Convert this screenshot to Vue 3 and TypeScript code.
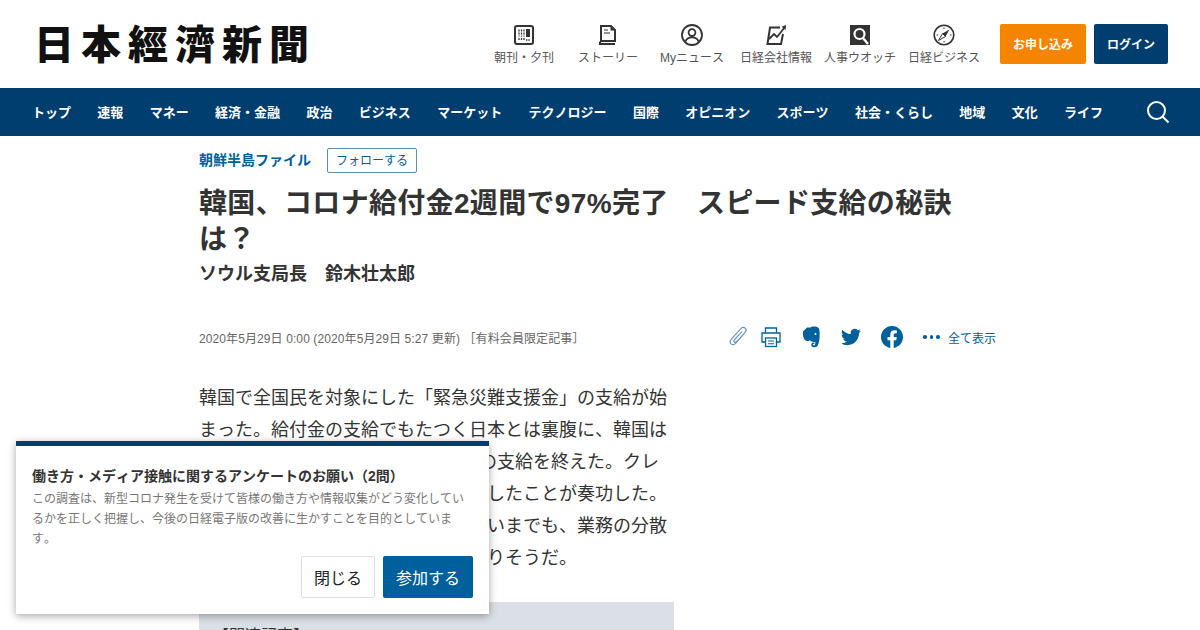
<script setup lang="ts">
const navItems: string[] = [
  'トップ', '速報', 'マネー', '経済・金融', '政治', 'ビジネス', 'マーケット',
  'テクノロジー', '国際', 'オピニオン', 'スポーツ', '社会・くらし', '地域', '文化', 'ライフ',
]

const bodyText =
  '韓国で全国民を対象にした「緊急災難支援金」の支給が始まった。給付金の支給でもたつく日本とは裏腹に、韓国は開始から約2週間で全世帯の97%への支給を終えた。クレジットカード会社のポイントで支給したことが奏功した。日本で同じ仕組みを導入とはいかないまでも、業務の分散化やデジタル化など学ぶ点は多くありそうだ。'
</script>

<template>
  <div class="page">
    <header class="top">
      <div class="logo">日本經濟新聞</div>
      <div class="tools">
        <a class="tool">
          <svg width="22" height="22" viewBox="0 0 22 22">
            <rect x="2" y="2" width="18" height="18" rx="2" fill="none" stroke="#333" stroke-width="2" />
            <path d="M6 5.500v7M8.500 5.500v7M11 5.500v7M6 14v2.500M8.500 14v2.500M11 14v2.500" stroke="#333" stroke-width="1.300" stroke-dasharray="2 1" />
            <rect x="13" y="5" width="4" height="8" fill="#333" />
            <path d="M13 16h4" stroke="#333" stroke-width="1.300" stroke-dasharray="1.400 .9" />
          </svg>
          <span>朝刊・夕刊</span>
        </a>
        <a class="tool">
          <svg width="22" height="22" viewBox="0 0 22 22">
            <path d="M4 17V2h10l4 4v11z" fill="none" stroke="#333" stroke-width="2" />
            <path d="M13.500 2v4.500H18z" fill="#333" />
            <path d="M7 6h4M7 9h6" stroke="#333" stroke-width="1.200" />
            <path d="M3 17.500v2.500h15" fill="none" stroke="#333" stroke-width="2" />
          </svg>
          <span>ストーリー</span>
        </a>
        <a class="tool">
          <svg width="22" height="22" viewBox="0 0 22 22" fill="none" stroke="#333" stroke-width="1.800">
            <circle cx="11" cy="11" r="10" />
            <circle cx="11" cy="8.600" r="3.400" />
            <path d="M4.400 17.600c1-3 3.500-4.200 6.600-4.200s5.600 1.200 6.600 4.200" />
          </svg>
          <span>Myニュース</span>
        </a>
        <a class="tool">
          <svg width="22" height="22" viewBox="0 0 22 22" fill="none" stroke="#333" stroke-width="2">
            <path d="M15 3.500H5L2.500 20H16l2-10" />
            <path d="M4 15l5-5 3 3 8-10" stroke-width="1.800" />
            <path d="M16.500 2.800L21 1l-.4 5z" fill="#333" stroke="none" />
          </svg>
          <span>日経会社情報</span>
        </a>
        <a class="tool">
          <svg width="22" height="22" viewBox="0 0 22 22">
            <rect x="1" y="1" width="20" height="20" fill="#333" />
            <circle cx="10.500" cy="10" r="5" fill="none" stroke="#fff" stroke-width="2.200" />
            <path d="M14 14l5 6" stroke="#fff" stroke-width="2.400" />
          </svg>
          <span>人事ウオッチ</span>
        </a>
        <a class="tool">
          <svg width="22" height="22" viewBox="0 0 22 22">
            <circle cx="11" cy="11" r="9.800" fill="none" stroke="#333" stroke-width="1.600" />
            <path d="M16.500 5.500L12.500 12.500 9.500 9.500z" fill="#333" />
            <path d="M5.500 16.500L9.500 9.500l3 3z" fill="none" stroke="#333" stroke-width="1" />
            <path d="M11 3.500v1.500M11 17v1.500M3.500 11H5M17 11h1.500" stroke="#333" stroke-width="1" />
          </svg>
          <span>日経ビジネス</span>
        </a>
      </div>
      <a class="btn-apply">お申し込み</a>
      <a class="btn-login">ログイン</a>
    </header>

    <nav class="gnav">
      <a v-for="item in navItems" :key="item" class="gnav-item">{{ item }}</a>
      <svg class="gnav-search" width="24" height="24" viewBox="0 0 24 24" fill="none" stroke="#fff" stroke-width="2">
        <circle cx="10.500" cy="10.500" r="8.500" />
        <path d="M16.500 16.500l6 6" />
      </svg>
    </nav>

    <main class="article">
      <div class="topic">
        <a class="topic-name">朝鮮半島ファイル</a>
        <a class="follow">フォローする</a>
      </div>
      <h1 class="title">韓国、コロナ給付金2週間で97%完了　スピード支給の秘訣は？</h1>
      <p class="author">ソウル支局長　鈴木壮太郎</p>

      <div class="meta">
        <span class="date">2020年5月29日 0:00 (2020年5月29日 5:27 更新) ［有料会員限定記事］</span>
        <div class="actions">
          <div class="action-group">
            <svg width="20" height="22" viewBox="0 0 20 22" fill="none" stroke="#5c8fb0" stroke-width="1.100">
              <path d="M16.500 6L7 17c-1.500 1.800-3.800 2-5 .9-1.200-1.200-1-3 .4-4.700L11.500 3c1.300-1.500 3.200-2 4.600-.8 1.300 1.200 1 3-.2 4.400L7.800 15.600c-.7.800-1.800 1-2.400.4-.6-.6-.5-1.500.2-2.300L13 5.500" />
            </svg>
            <svg width="22" height="22" viewBox="0 0 22 22" fill="none" stroke="#00609c" stroke-width="1.300">
              <path d="M5.500 6.500V2h11v4.500" />
              <path d="M5 16H2V7h18v9h-3" />
              <rect x="5.500" y="12" width="11" height="8.500" />
              <path d="M8 15h6M8 17.800h6" stroke-width="1.100" />
            </svg>
          </div>
          <svg width="20" height="22" viewBox="0 0 20 22">
            <path fill="#00609c" d="M5 1.500h3.500c1-1 3-1.300 5-.9 2.500.5 3.500 1.400 3.800 3.400.4 2.300.5 5 .2 8-.3 3.500-1 6.800-2.500 8.500-1.500 1-3.500 1-4.800.2-1.200-.9-1.200-2.900 0-3.800 1-.6 2.300-.4 2.900.4l-1.300.6c-.5-.3-1.200 0-1.100.7.200.8 1.300 1 2 .6.700-.7.800-2 .5-3.200-2.500 0-4.500-.4-5.300-2-.7 1.300-2.300 1.300-3.700.8C2 13.800 1.300 11.500 1 9c-.1-1.500 0-2.700 0-3.500z" />
            <circle cx="13.500" cy="8" r="1" fill="#fff" />
          </svg>
          <svg width="20" height="20" viewBox="0 0 24 24">
            <path fill="#00609c" d="M23.953 4.570a10 10 0 01-2.825.775 4.958 4.958 0 002.163-2.723c-.951.555-2.005.959-3.127 1.184a4.920 4.920 0 00-8.384 4.482C7.690 8.095 4.067 6.130 1.640 3.162a4.822 4.822 0 00-.666 2.475c0 1.710.870 3.213 2.188 4.096a4.904 4.904 0 01-2.228-.616v.060a4.923 4.923 0 003.946 4.827 4.996 4.996 0 01-2.212.085 4.936 4.936 0 004.604 3.417 9.867 9.867 0 01-6.102 2.105c-.390 0-.779-.023-1.170-.067a13.995 13.995 0 007.557 2.209c9.053 0 13.998-7.496 13.998-13.985 0-.210 0-.420-.015-.630A9.935 9.935 0 0024 4.590z" />
          </svg>
          <svg width="22" height="22" viewBox="0 0 24 24">
            <path fill="#00609c" d="M24 12.073c0-6.627-5.373-12-12-12s-12 5.373-12 12c0 5.990 4.388 10.954 10.125 11.854v-8.385H7.078v-3.470h3.047V9.430c0-3.007 1.792-4.669 4.533-4.669 1.312 0 2.686.235 2.686.235v2.953H15.830c-1.491 0-1.956.925-1.956 1.874v2.250h3.328l-.532 3.470h-2.796v8.385C19.612 23.027 24 18.062 24 12.073z" />
          </svg>
          <a class="show-all"><span class="dots"><i></i><i></i><i></i></span>全て表示</a>
        </div>
      </div>

      <p class="body">{{ bodyText }}</p>
      <div class="related">【関連記事】</div>
    </main>

    <aside class="survey">
      <p class="survey-title">働き方・メディア接触に関するアンケートのお願い（2問）</p>
      <p class="survey-text">この調査は、新型コロナ発生を受けて皆様の働き方や情報収集がどう変化しているかを正しく把握し、今後の日経電子版の改善に生かすことを目的としています。</p>
      <div class="survey-buttons">
        <button class="btn-close">閉じる</button>
        <button class="btn-join">参加する</button>
      </div>
    </aside>
  </div>
</template>

<style>
html, body {
  margin: 0;
  background: #fff;
}
</style>

<style scoped>
.page {
  position: relative;
  width: 1200px;
  height: 630px;
  overflow: hidden;
  font-family: "Liberation Sans", "Noto Sans CJK JP", sans-serif;
  font-kerning: none;
  text-spacing-trim: space-all;
  color: #333;
}

.top {
  display: flex;
  align-items: center;
  height: 88px;
  padding: 0 32px 0 34px;
  box-sizing: border-box;
}
.logo {
  margin-bottom: 4px;
  font-family: "Noto Sans CJK JP", sans-serif;
  font-weight: 900;
  font-size: 40px;
  letter-spacing: 7px;
  line-height: 44px;
  color: #111;
  white-space: nowrap;
}
.tools {
  display: flex;
  margin-left: auto;
  margin-right: 14px;
}
.tool {
  display: flex;
  flex-direction: column;
  align-items: center;
  width: 84px;
  gap: 5px;
  font-size: 12px;
  line-height: 14px;
  color: #555;
  white-space: nowrap;
}
.btn-apply,
.btn-login {
  display: flex;
  align-items: center;
  justify-content: center;
  height: 40px;
  padding-bottom: 2px;
  box-sizing: border-box;
  border-radius: 2px;
  color: #fff;
  font-size: 12px;
  font-weight: 700;
}
.btn-apply {
  width: 86px;
  background: #f58500;
  margin-right: 8px;
}
.btn-login {
  width: 74px;
  background: #003e70;
}

.gnav {
  display: flex;
  align-items: center;
  height: 48px;
  padding: 0 30px 0 32px;
  background: #003e70;
}
.gnav-item {
  margin-right: 26.350px;
  margin-bottom: 2px;
  color: #fff;
  font-size: 13px;
  font-weight: 700;
  white-space: nowrap;
}
.gnav-search {
  margin-left: auto;
}

.article {
  width: 797px;
  margin-left: 199px;
}
.topic {
  display: flex;
  align-items: center;
  gap: 16px;
  padding-top: 12px;
}
.topic-name {
  margin-bottom: 4px;
  color: #00609c;
  font-size: 14px;
  font-weight: 700;
}
.follow {
  display: flex;
  align-items: center;
  justify-content: center;
  width: 88px;
  height: 23px;
  padding-bottom: 2px;
  box-sizing: content-box;
  height: 21px;
  border: 1px solid #5c8fb0;
  border-radius: 2px;
  color: #00609c;
  font-size: 12px;
}
.title {
  width: 775px;
  margin: 13px 0 0;
  font-size: 28px;
  font-weight: 700;
  letter-spacing: 0.33px;
  line-height: 36px;
  color: #333;
}
.author {
  margin: 2px 0 0;
  font-size: 18px;
  font-weight: 700;
  line-height: 28px;
}
.meta {
  display: flex;
  align-items: center;
  justify-content: space-between;
  height: 30px;
  margin-top: 34px;
}
.date {
  font-size: 12px;
  letter-spacing: 0.1px;
  color: #666;
}
.actions {
  display: flex;
  align-items: center;
  gap: 19.500px;
}
.action-group {
  display: flex;
  align-items: center;
  gap: 11px;
}
.show-all {
  display: flex;
  align-items: center;
  gap: 8px;
  margin-left: 1px;
  color: #00609c;
  font-size: 12px;
}
.dots {
  display: flex;
  gap: 3px;
}
.dots i {
  width: 3.500px;
  height: 3.500px;
  border-radius: 50%;
  background: #00609c;
}
.body {
  width: 475px;
  margin: 30px 0 0;
  font-size: 18px;
  line-height: 32px;
  color: #333;
}
.related {
  width: 475px;
  margin-top: 28px;
  padding: 20px 14px;
  box-sizing: border-box;
  background: #dbe0e6;
  font-size: 16px;
}

.survey {
  position: absolute;
  left: 16px;
  top: 441px;
  width: 473px;
  height: 173px;
  box-sizing: border-box;
  padding: 22px 16px 0;
  background: #fff;
  border-top: 5px solid #003e70;
  box-shadow: 0 2px 8px rgba(0, 0, 0, 0.35);
}
.survey-title {
  margin: 0;
  font-size: 14px;
  font-weight: 700;
  line-height: 16px;
}
.survey-text {
  width: 433px;
  margin: 5px 0 0;
  font-size: 12px;
  line-height: 20px;
  color: #777;
}
.survey-buttons {
  display: flex;
  justify-content: flex-end;
  gap: 8px;
  margin-top: 7px;
}
.btn-close,
.btn-join {
  height: 42px;
  padding: 0;
  border-radius: 2px;
  font-family: inherit;
  font-size: 16px;
}
.btn-close {
  width: 74px;
  border: 1px solid #ddd;
  background: #fff;
  color: #222;
}
.btn-join {
  width: 90px;
  border: none;
  background: #00609c;
  color: #fff;
}
</style>
